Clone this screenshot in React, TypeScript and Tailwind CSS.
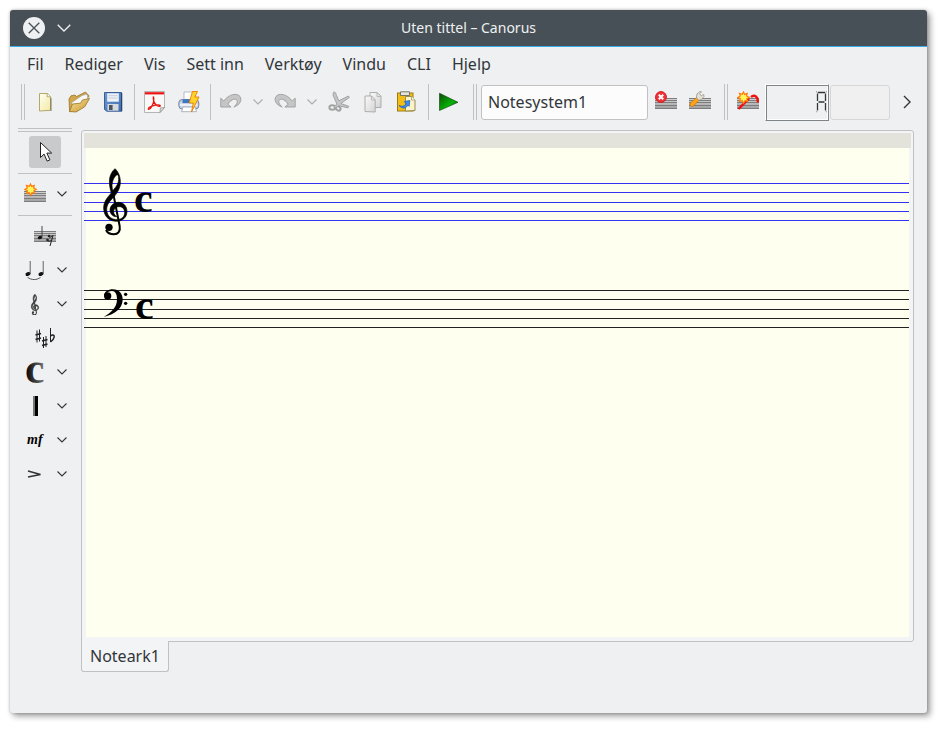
import type { ReactNode } from "react";

const sans = "font-['Noto_Sans','Open_Sans',sans-serif]";

function Icon({ children, className = "" }: { children: ReactNode; className?: string }) {
  return (
    <svg viewBox="0 0 22 22" className={`size-[22px] shrink-0 ${className}`} aria-hidden="true">
      {children}
    </svg>
  );
}

function Gradients() {
  return (
    <svg className="absolute size-0" aria-hidden="true">
      <defs>
        <linearGradient id="staff" x1="0" y1="0" x2="0" y2="1">
          <stop offset="0" stopColor="#d9d9d9" />
          <stop offset="1" stopColor="#9c9c9c" />
        </linearGradient>
        <linearGradient id="paper" x1="0" y1="0" x2="1" y2="1">
          <stop offset="0" stopColor="#fffff4" />
          <stop offset="1" stopColor="#f3e9a0" />
        </linearGradient>
        <linearGradient id="folder" x1="0" y1="0" x2="1" y2="1">
          <stop offset="0" stopColor="#f8e39a" />
          <stop offset="1" stopColor="#c8962f" />
        </linearGradient>
        <linearGradient id="disk" x1="0" y1="0" x2="1" y2="1">
          <stop offset="0" stopColor="#6d9ad6" />
          <stop offset="1" stopColor="#3f6cab" />
        </linearGradient>
        <linearGradient id="grey" x1="0" y1="0" x2="1" y2="1">
          <stop offset="0" stopColor="#fafafa" />
          <stop offset="1" stopColor="#d4d4d4" />
        </linearGradient>
        <linearGradient id="play" x1="0" y1="0" x2="1" y2="1">
          <stop offset="0" stopColor="#0b4d05" />
          <stop offset="0.6" stopColor="#06b306" />
          <stop offset="1" stopColor="#023a02" />
        </linearGradient>
        <linearGradient id="ink" x1="0" y1="0" x2="1" y2="0">
          <stop offset="0" stopColor="#000" />
          <stop offset="1" stopColor="#777" />
        </linearGradient>
      </defs>
    </svg>
  );
}

function StaffBars({ top = 9 }: { top?: number }) {
  return (
    <g>
      <rect x="0" y={top} width="22" height="11" fill="url(#staff)" />
      {[0, 2, 4, 7, 10].map((d) => (
        <rect key={d} x="0" y={top + d} width="22" height="1" fill="#7c7c7c" />
      ))}
    </g>
  );
}

function Star() {
  return (
    <path
      d="M6.5 1 7.7 3.4 10.2 2.4 9.6 5 12.2 6.3 9.8 7.7 10.5 10.3 8 9.6 6.6 12.2 5.2 9.7 2.6 10.4 3.4 7.8 .8 6.4 3.3 5 2.5 2.4 5.2 3.3Z"
      fill="#fff45a"
      stroke="#ff7a0a"
      strokeWidth="1.2"
    />
  );
}

const NewFile = () => (
  <Icon>
    <path d="M5.5 2.5h8l3 3v13.8l-11 .7Z" fill="url(#paper)" stroke="#b3a86a" />
    <path d="M13.2 2.5v3.3h3.3" fill="#fff" stroke="#a3985a" strokeWidth=".8" />
    <path d="M17 7v13" stroke="#605d4a" strokeWidth=".8" />
  </Icon>
);
const OpenFile = () => (
  <Icon>
    <path d="M1 8 3 4.8 7 4l1.5 1.6L17.5 1l3.7 4L9 20.3l-7.4.3Z" fill="#d3a748" stroke="#9a7329" strokeWidth=".8" />
    <path d="M3 12 14 4.5l5-1.5 1 5L8 16Z" fill="#f7f7f4" stroke="#999" strokeWidth=".6" />
    <path d="M1.5 20.5 4.5 13l8-.8 2-3.2 7-1.5-4.8 8.3L8 21Z" fill="url(#folder)" stroke="#9a7329" strokeWidth=".8" />
  </Icon>
);
const SaveFile = () => (
  <Icon>
    <path d="M2.5 1.5h17v18.7h-15l-2-2Z" fill="url(#disk)" stroke="#3a5f97" />
    <rect x="5.2" y="2.3" width="11.6" height="8.4" fill="#eef2f7" />
    <path d="M6.5 4.7h9M6.5 7h9" stroke="#b9c3d1" strokeWidth=".8" />
    <rect x="5.5" y="13" width="11" height="6.7" fill="#d5d8dc" />
    <rect x="7" y="14" width="3.6" height="5" fill="#4a5362" />
    <path d="M19.8 2v18.3" stroke="#1b3158" strokeWidth=".8" />
  </Icon>
);
const Pdf = () => (
  <Icon>
    <path d="M.5.5h20v16l-4.5 5H.5Z" fill="#f8f8f8" stroke="#b5b5b5" />
    <path d="M20.5 16.5 16 21.5l.3-4.6Z" fill="#ddd" stroke="#888" strokeWidth=".7" />
    <rect x="1" y="1.2" width="19" height="2.2" fill="#ee1111" />
    <path d="M9.4 5.5c1 2.9.3 5.7-1 8.6-.8 1.8-2.3 4.2-3.7 4.3-1.5-.8 1.5-3 4-3.6 2.7-.8 6.3-1.5 7.5-.3.5 1.4-2.3 1-3.7-.2-2.3-1.9-3.5-5.6-3.1-8.800Z" fill="none" stroke="#e8130d" strokeWidth="1.3" />
  </Icon>
);
const Print = () => (
  <Icon>
    <path d="M6 1h10v10H6Z" fill="#fff" stroke="#aab" strokeWidth=".8" />
    <rect x=".8" y="8.5" width="20" height="9.5" rx="3.5" fill="#c8d2e2" stroke="#7484a0" />
    <rect x="4.5" y="8.5" width="12" height="3.8" fill="#3b78c4" />
    <rect x="2" y="12.5" width="17.5" height="2.5" rx="1" fill="#eef2f8" />
    <path d="M5 16h12l1.5 4.7H3.5Z" fill="#fff" stroke="#98a3b5" strokeWidth=".8" />
    <path d="M14.500.5h5L16.800 6h4.200l-7.500 15 1.800-9h-4.200Z" fill="#ffd42a" stroke="#e87a05" strokeWidth=".9" />
  </Icon>
);
const Undo = ({ flip = false }: { flip?: boolean }) => (
  <Icon className={flip ? "-scale-x-100" : ""}>
    <path
      d="M.8 7.2 3.8 10C7.5 4.8 13.5 2.4 17.5 3.8c4.6 1.6 4.3 6.8.3 10.2-1.3 1-2.6 1.6-4 2 3-2.4 4.6-5.6 2.6-7.3-2.2-1.7-6.2.6-8.6 4.6l3.3 2.7H.8Z"
      fill="#c6c6c6"
      stroke="#a2a2a2"
      strokeWidth="1"
    />
  </Icon>
);
const Cut = () => (
  <Icon>
    <g fill="none" stroke="#a2a2a2" strokeWidth="2">
      <ellipse cx="4.3" cy="16.5" rx="2.9" ry="2.2" />
      <ellipse cx="10.3" cy="17.2" rx="2.6" ry="2" transform="rotate(35 10 17)" />
    </g>
    <path d="M5.5 1.2c2-.7 2.6 1.6 3 3.4l2.4 5.2L20.5 5l.8 1.5-8.5 6 8 2.8-.8 1.5-9.2-2-4 2.4-1-1.5 3.2-2.4L5 4Z" fill="#c6c6c6" stroke="#9c9c9c" strokeWidth=".9" />
  </Icon>
);
const Copy = () => (
  <Icon>
    <path d="M8 1.5h7l4 3.5v11.5H8Z" fill="url(#grey)" stroke="#adadad" />
    <path d="M3 5h6.5l3.7 3.7V21L3 20.5Z" fill="url(#grey)" stroke="#adadad" />
    <path d="M9.5 5v4h3.5M15 2v3.5h4" fill="none" stroke="#adadad" strokeWidth=".8" />
  </Icon>
);
const Paste = () => (
  <Icon>
    <rect x="1.5" y="2" width="15.5" height="18" fill="#f3bd16" stroke="#9b7a18" />
    <path d="M4.500.8h9V4.500h-9Z" fill="#e4e4df" stroke="#6d6a5c" strokeWidth=".9" />
    <path d="M9.5 5.5h6l3.500 3.500v10.500l-9.500.5Z" fill="#fdf3c8" stroke="#998c52" />
    <path d="M15.500 5.500V9H19" fill="#fff" stroke="#998c52" strokeWidth=".7" />
    <path d="M3 14.500c3.500 1.500 6 .6 7-2L8.300 10.500l5.500-1-.6 5.800-1.500-1.300C10.500 18 6 18 3 14.500Z" fill="#3f8df0" stroke="#1758b5" strokeWidth=".7" />
  </Icon>
);
const Play = () => (
  <Icon>
    <path d="M1.500 2.200 20 11.300 1.500 19.500Z" fill="url(#play)" stroke="#0c3d0c" strokeWidth=".6" />
  </Icon>
);
const RemoveStaff = () => (
  <Icon>
    <StaffBars top={7} />
    <circle cx="6" cy="6" r="5.4" fill="#f0353a" stroke="#d8161b" />
    <path d="m3.800 3.800 4.400 4.400m0-4.400L3.800 8.200" stroke="#fff" strokeWidth="2" />
  </Icon>
);
const EditStaff = () => (
  <Icon>
    <StaffBars top={7} />
    <path d="m8.200 5.800 2.600 2.600-6.500 6.800c-2 1-4.200-.8-3-3Z" fill="#ffa21a" stroke="#c96d00" strokeWidth=".7" />
    <path d="m7.500 6.500.4-3.500L11 .5l1.500.3-1.700 2 1.500 2.100 2.400-1.400.3 2-2.500 3-3 .8Z" fill="#e3e0d6" stroke="#8f8c83" strokeWidth=".7" />
  </Icon>
);
const NewStaff = () => (
  <Icon>
    <StaffBars top={8} />
    <Star />
  </Icon>
);
const NewSlur = () => (
  <Icon>
    <StaffBars top={7} />
    <path d="M1.500 18 12 7.500M14 6c3.500-3 7-.5 7 5.500" fill="none" stroke="#f30d0d" strokeWidth="2.400" />
    <Star />
  </Icon>
);
const InsertMusic = () => (
  <Icon>
    <StaffBars top={6} />
    <ellipse cx="6" cy="12.500" rx="2.300" ry="1.700" fill="#111" transform="rotate(-20 6 12.500)" />
    <path d="M8 12.500V1" stroke="#444" strokeWidth="1" />
    <circle cx="15" cy="11" r="1.300" fill="#222" />
    <circle cx="13.500" cy="15" r="1.300" fill="#222" />
    <path d="M15 12c1.500.3 2.500 0 4-1.500L16 21M14 16c1.500.3 2.500 0 3.500-1" fill="none" stroke="#222" strokeWidth="1" />
  </Icon>
);
const TiedNotes = () => (
  <Icon>
    <ellipse cx="4" cy="15" rx="2.600" ry="1.900" transform="rotate(-20 4 15)" fill="#111" />
    <ellipse cx="17" cy="15" rx="2.600" ry="1.900" transform="rotate(-20 17 15)" fill="#111" />
    <path d="M6.200 15V2M19.200 15V2" stroke="#555" strokeWidth=".9" />
    <path d="M3.500 18.300c4 3 9.500 3 13 0" fill="none" stroke="#555" strokeWidth="1" />
  </Icon>
);

const TREBLE =
  "M345 146C356 156 362 172 361 190C359 214 344 228 333 240C323 251 318 262 321 276C325 293 338 299 352 299C366 298 374 289 374 278C374 266 366 259 357 260C347 260 340 268 341 277C342 284 346 287 350 290C340 291 331 283 330 271C330 257 342 247 355 247C370 247 381 258 381 275C381 292 367 304 349 304C327 304 311 288 311 264C311 244 323 232 334 219C329 203 327 190 329 175C331 163 337 153 345 146ZM352 164C345 166 337 180 336 196C336 202 337 207 338 212C350 200 357 188 356 174C356 168 354 164 352 164Z";

function Treble({ transform, outline = 2 }: { transform: string; outline?: number }) {
  return (
    <g transform={transform}>
      <path d={TREBLE} fillRule="evenodd" stroke="#000" strokeWidth={outline} />
      <path d="M338 212 359 318C362 334 354 343 342 343C330 343 322 338 318 330" fill="none" stroke="#000" strokeWidth={4 + outline} />
      <circle cx="327" cy="322" r="11" />
    </g>
  );
}

const ClefIcon = () => (
  <Icon>
    <g opacity=".75">
      <Treble transform="translate(-25 -14) scale(0.104)" outline={6} />
    </g>
  </Icon>
);
const KeySignature = () => (
  <Icon>
    <g fill="none" stroke="#222" strokeWidth="1">
      <path d="M3 3.500v12M5.500 2.500v12M9.500 10v11M12 9v11M16.500 1v14" />
      <path d="m1.500 8 5.500-1.500M1.500 12.500 7 11M8 14l5.500-1.500M8 18.500l5.500-1.500" strokeWidth="1.800" />
      <path d="M16.500 9c2-1.800 4-1.200 3.700 1-.3 2-2 3.800-3.700 5" strokeWidth="1.500" />
    </g>
  </Icon>
);
const TimeIcon = () => (
  <Icon className="overflow-visible">
    <text x="1" y="22" fontSize="44" fontWeight="700" fill="url(#ink)" className="font-['Liberation_Serif',serif]">c</text>
  </Icon>
);
const Barline = () => (
  <Icon>
    <rect x="9" y="1" width="2" height="20" fill="#777" />
    <rect x="11" y="1" width="3" height="20" fill="#000" />
  </Icon>
);
const Dynamic = () => (
  <Icon className="overflow-visible">
    <text x="3" y="15" fontSize="14" fontWeight="700" fontStyle="italic" className="font-['Liberation_Serif',serif]">mf</text>
  </Icon>
);
const Accent = () => (
  <Icon>
    <path d="m4 8 12.500 3.500L4 14" fill="none" stroke="#333" strokeWidth="1.400" />
  </Icon>
);

function Chevron({ className = "text-[#31363b]" }: { className?: string }) {
  return (
    <svg viewBox="0 0 10 6" className={`h-[6px] w-[10px] ${className}`} aria-hidden="true">
      <path d="m.5.5 4.500 4.500L9.500.5" fill="none" stroke="currentColor" strokeWidth="1.100" />
    </svg>
  );
}

function Tool({ label, children }: { label: string; children: ReactNode }) {
  return (
    <button aria-label={label} className="flex h-[34px] w-[34px] shrink-0 items-center justify-center">
      {children}
    </button>
  );
}

function Menu({ label, className }: { label: string; className?: string }) {
  return (
    <button aria-label={label} className="flex h-[34px] w-5 shrink-0 items-center justify-center">
      <Chevron className={className} />
    </button>
  );
}

const Sep = () => <div className="mr-[3px] ml-1 h-9 w-px shrink-0 bg-[#bfc1c3]" />;
const Grip = () => <div className="h-9 w-1 shrink-0 border-x border-[#bfc1c3]" />;
const SideSep = () => <div className="mt-1 mb-[3px] h-px bg-[#bfc1c3]" />;

const menus = ["Fil", "Rediger", "Vis", "Sett inn", "Verktøy", "Vindu", "CLI", "Hjelp"];

const sideTools = [
  { label: "Bind sammen noter", icon: <TiedNotes /> },
  { label: "Nøkkel", icon: <ClefIcon /> },
  { label: "Toneart", icon: <KeySignature />, single: true },
  { label: "Taktart", icon: <TimeIcon /> },
  { label: "Taktstrek", icon: <Barline /> },
  { label: "Dynamikk", icon: <Dynamic /> },
  { label: "Artikulasjon", icon: <Accent /> },
];

function TitleBar() {
  return (
    <header className="grid h-[37px] grid-cols-[1fr_auto_1fr] items-center rounded-t-[3px] border-b border-[#3daee9] bg-[#475057]">
      <div className="flex items-center gap-3 pl-[13px]">
        <button aria-label="Lukk" className="flex size-[22px] items-center justify-center rounded-full bg-[#eff0f1]">
          <svg viewBox="0 0 12 12" className="size-3" aria-hidden="true">
            <path d="m.7.7 10.600 10.600m0-10.600L.7 11.300" stroke="#475057" strokeWidth="1.300" />
          </svg>
        </button>
        <button aria-label="Vindusmeny" className="flex h-[22px] w-[14px] items-center">
          <svg viewBox="0 0 14 8" className="h-2 w-[14px]" aria-hidden="true">
            <path d="m.7.7 6.300 6.300L13.300.7" fill="none" stroke="#eff0f1" strokeWidth="1.300" />
          </svg>
        </button>
      </div>
      <h1 className="text-sm text-[#eff0f1]">Uten tittel – Canorus</h1>
    </header>
  );
}

function Toolbar() {
  const faded = "text-[#a9abad]";
  return (
    <div className="flex h-[42px] items-center pr-[10px] pl-[11px]">
      <Grip />
      <div className="w-[3px] shrink-0" />
      <Tool label="Ny"><NewFile /></Tool>
      <Tool label="Åpne"><OpenFile /></Tool>
      <Tool label="Lagre"><SaveFile /></Tool>
      <Sep />
      <Tool label="Eksporter til PDF"><Pdf /></Tool>
      <Tool label="Skriv ut"><Print /></Tool>
      <Sep />
      <Tool label="Angre"><Undo /></Tool>
      <Menu label="Angrehistorikk" className={faded} />
      <Tool label="Gjør om"><Undo flip /></Tool>
      <Menu label="Gjør om-historikk" className={faded} />
      <Tool label="Klipp ut"><Cut /></Tool>
      <Tool label="Kopier"><Copy /></Tool>
      <Tool label="Lim inn"><Paste /></Tool>
      <Sep />
      <Tool label="Spill av"><Play /></Tool>
      <div className="w-[7px] shrink-0" />
      <Grip />
      <input
        aria-label="Navn på notesystem"
        defaultValue="Notesystem1"
        className="ml-1 h-[35px] w-[167px] shrink-0 rounded-[3px] border border-[#bfc1c3] bg-[#fcfcfc] px-1.5 text-base text-[#31363b] outline-none"
      />
      <div className="w-px shrink-0" />
      <Tool label="Fjern notesystem"><RemoveStaff /></Tool>
      <Tool label="Rediger notesystem"><EditStaff /></Tool>
      <div className="w-[7px] shrink-0" />
      <Grip />
      <div className="w-[3px] shrink-0" />
      <Tool label="Ny stemme"><NewSlur /></Tool>
      <div className="flex h-[37px] w-16 shrink-0 items-center justify-end border border-t-white border-r-[#7f8488] border-b-[#7f8488] border-l-white shadow-[inset_1px_1px_0_#7f8488,inset_-1px_-1px_0_#fff]">
        <svg viewBox="0 0 11 22" className="mr-px h-[22px] w-[11px]" aria-hidden="true">
          <path d="M2 1.500h7M2.500 11h6M1.500 2.500v7.500M9.500 2.500v7.500M1.500 12v7.500M9.500 12v7.500" stroke="#31363b" strokeWidth="1.300" />
          <path d="M0 0l1.500 2M11 0 9.500 2M0 21.500l1.500-2M11 21.500l-1.500-2" stroke="#9a9da0" strokeWidth="1" />
        </svg>
      </div>
      <input
        aria-label="Stemmenavn"
        disabled
        className="ml-px h-[35px] w-[60px] shrink-0 rounded-[3px] border border-[#d6d7d9] bg-[#f0f0f0]"
      />
      <button aria-label="Flere verktøy" className="ml-auto flex h-[34px] w-5 items-center justify-center">
        <svg viewBox="0 0 8 14" className="h-[14px] w-2" aria-hidden="true">
          <path d="m1 1 6 6-6 6" fill="none" stroke="#31363b" strokeWidth="1.400" />
        </svg>
      </button>
    </div>
  );
}

function Sidebar() {
  return (
    <aside className="mt-[5px] w-[54px] shrink-0">
      <div className="h-1 border-y border-[#bfc1c3]" />
      <div className="mt-[3px] flex h-[34px] items-center justify-center">
        <button aria-label="Velg" className="flex size-8 items-center justify-center rounded-[3px] bg-[#c9cacc]">
          <Icon>
            <path d="M6.500 1.500v15l3.600-3.400 3 7 2.800-1.200-3-6.800h4.800Z" fill="#fff" stroke="#222" strokeWidth="1" />
          </Icon>
        </button>
      </div>
      <SideSep />
      <div className="flex">
        <Tool label="Nytt notesystem"><NewStaff /></Tool>
        <Menu label="Valg for nytt notesystem" />
      </div>
      <SideSep />
      <div className="flex justify-center">
        <Tool label="Sett inn noter"><InsertMusic /></Tool>
      </div>
      {sideTools.map((t) => (
        <div key={t.label} className="flex justify-center">
          <Tool label={t.label}>{t.icon}</Tool>
          {!t.single && <Menu label={`${t.label}: valg`} />}
        </div>
      ))}
    </aside>
  );
}

function Staff({ ys, color }: { ys: number[]; color: string }) {
  return (
    <g stroke={color} strokeWidth="1" shapeRendering="crispEdges">
      {ys.map((y) => (
        <line key={y} x1="0" x2="100%" y1={y + 0.5} y2={y + 0.5} />
      ))}
    </g>
  );
}

function Score() {
  return (
    <svg className="min-h-0 w-full flex-1" role="img" aria-label="Partitur">
      <rect x="2" y="0" width="100%" height="100%" fill="#ffffef" />
      <Staff ys={[35, 44, 54, 63, 72]} color="#3232f0" />
      <Staff ys={[142, 151, 161, 170, 179]} color="#222" />
      <Treble transform="translate(-84 -28) scale(0.3333)" />
      <g transform="translate(-84 97) scale(0.3333)">
        <path d="M312 153C312 141 324 133 339 133C357 133 369 147 368 165C367 191 344 208 311 216C334 203 351 188 351 163C351 147 346 138 336 138C328 138 321 141 320 146Z" />
        <circle cx="323" cy="153" r="11" />
        <circle cx="377" cy="148" r="5" />
        <circle cx="377" cy="175" r="5" />
      </g>
      <g fontSize="42" fontWeight="700" className="font-['Liberation_Serif',serif]">
        <text x="50" y="64">c</text>
        <text x="51" y="171">c</text>
      </g>
    </svg>
  );
}

export default function App() {
  return (
    <div className={`flex h-screen flex-col bg-white pt-[10px] pr-4 pb-4 pl-[10px] ${sans}`}>
      <Gradients />
      <div className="flex min-h-0 flex-1 flex-col rounded-[3px] bg-[#eff0f1] text-base text-[#31363b] shadow-[3px_3px_6px_rgba(0,0,0,0.4),0_0_3px_rgba(0,0,0,0.25)]">
        <TitleBar />
        <nav className="flex h-[34px] items-center gap-[21px] pl-[17px]">
          {menus.map((m) => (
            <button key={m} className="whitespace-nowrap">{m}</button>
          ))}
        </nav>
        <Toolbar />
        <div className="flex min-h-0 flex-1 pr-[13px] pb-[41px] pl-2">
          <Sidebar />
          <main className="mt-[7px] ml-[9px] flex min-w-0 flex-1 flex-col">
            <div className="flex min-h-0 flex-1 flex-col rounded-t-[3px] rounded-br-[3px] border border-[#bfc1c3] bg-[#f3f4f6] p-0.5">
              <div className="h-[15px] shrink-0 bg-[#e3e3dc]" />
              <div className="flex min-h-0 flex-1 flex-col pr-0.5 pb-0.5">
                <Score />
              </div>
            </div>
            <div role="tablist" className="-mt-px flex">
              <button role="tab" aria-selected="true" className="h-[31px] rounded-b-[3px] border border-t-0 border-[#bfc1c3] bg-[#f3f4f6] px-2">
                Noteark1
              </button>
            </div>
          </main>
        </div>
      </div>
    </div>
  );
}
